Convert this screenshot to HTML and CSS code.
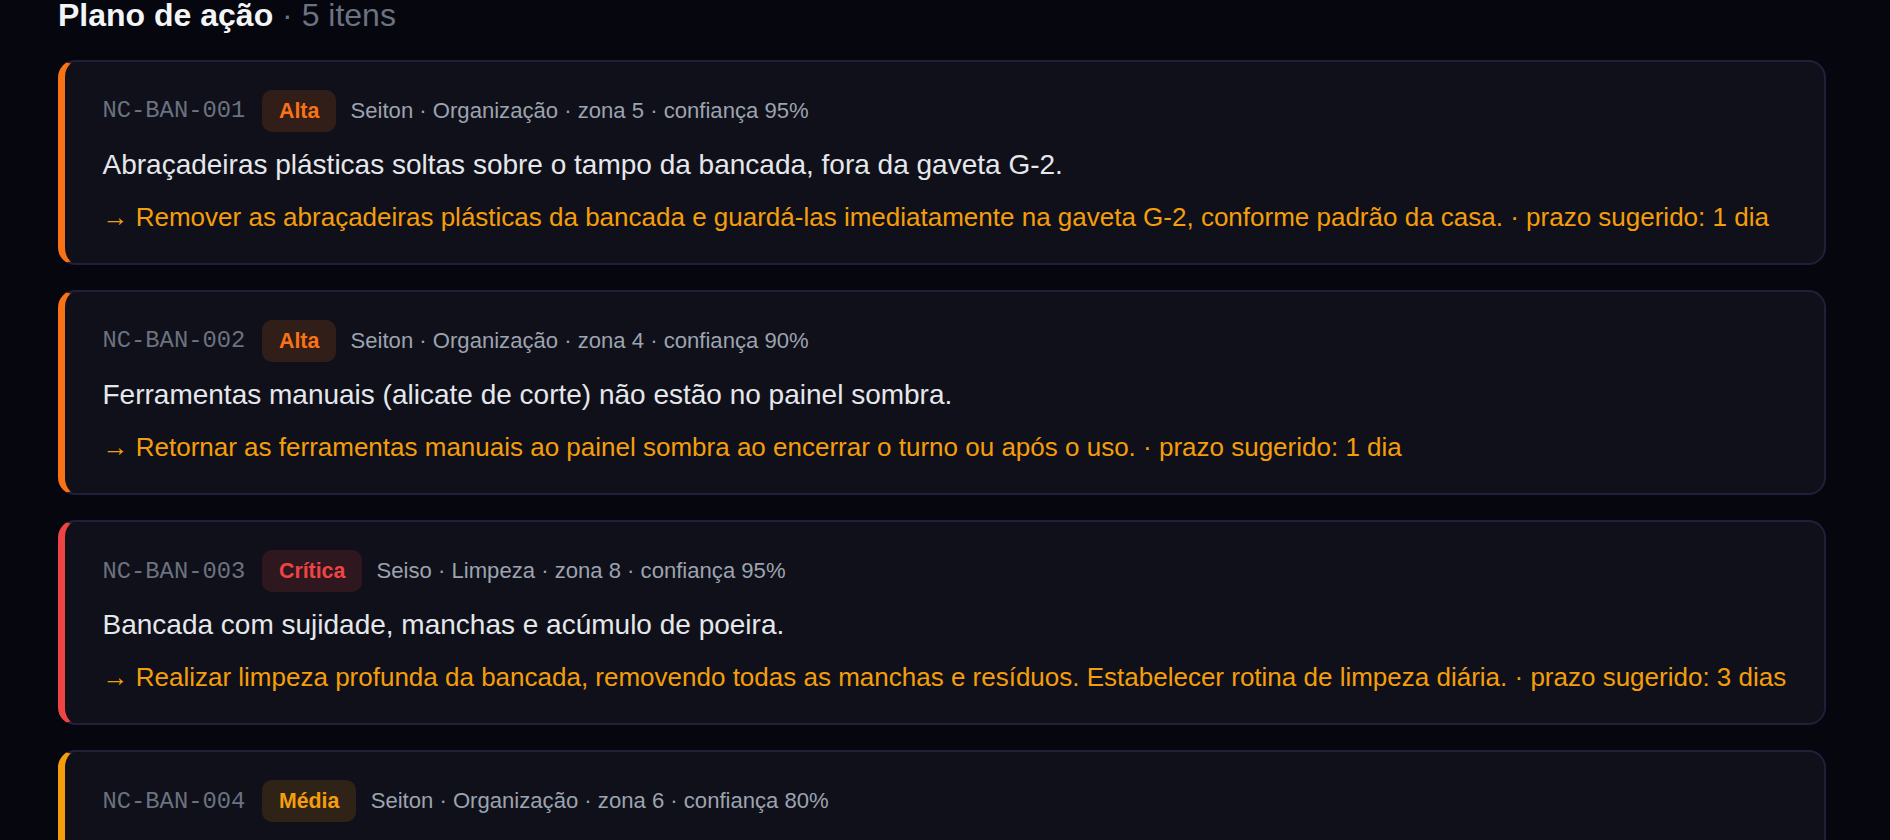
FILE: index.html
```html
<!DOCTYPE html>
<html lang="pt-BR">
<head>
<meta charset="utf-8">
<title>Plano de ação</title>
<link rel="stylesheet" href="styles.css">
</head>
<body>
<main class="plan">
  <h2 class="plan-title">Plano de ação <span class="count">· 5 itens</span></h2>
  <ul class="items">
    <li class="item sev-alta">
      <div class="item-head">
        <span class="item-id">NC-BAN-001</span>
        <span class="badge">Alta</span>
        <span class="meta">Seiton · Organização · zona 5 · confiança 95%</span>
      </div>
      <p class="desc">Abraçadeiras plásticas soltas sobre o tampo da bancada, fora da gaveta G-2.</p>
      <p class="action">→ Remover as abraçadeiras plásticas da bancada e guardá-las imediatamente na gaveta G-2, conforme padrão da casa. · prazo sugerido: 1 dia</p>
    </li>
    <li class="item sev-alta">
      <div class="item-head">
        <span class="item-id">NC-BAN-002</span>
        <span class="badge">Alta</span>
        <span class="meta">Seiton · Organização · zona 4 · confiança 90%</span>
      </div>
      <p class="desc">Ferramentas manuais (alicate de corte) não estão no painel sombra.</p>
      <p class="action">→ Retornar as ferramentas manuais ao painel sombra ao encerrar o turno ou após o uso. · prazo sugerido: 1 dia</p>
    </li>
    <li class="item sev-critica">
      <div class="item-head">
        <span class="item-id">NC-BAN-003</span>
        <span class="badge">Crítica</span>
        <span class="meta">Seiso · Limpeza · zona 8 · confiança 95%</span>
      </div>
      <p class="desc">Bancada com sujidade, manchas e acúmulo de poeira.</p>
      <p class="action">→ Realizar limpeza profunda da bancada, removendo todas as manchas e resíduos. Estabelecer rotina de limpeza diária. · prazo sugerido: 3 dias</p>
    </li>
    <li class="item sev-media">
      <div class="item-head">
        <span class="item-id">NC-BAN-004</span>
        <span class="badge">Média</span>
        <span class="meta">Seiton · Organização · zona 6 · confiança 80%</span>
      </div>
      <p class="desc">Cabos e extensões sem identificação enrolados sobre a bancada.</p>
      <p class="action">→ Identificar e organizar os cabos no suporte lateral da bancada. · prazo sugerido: 2 dias</p>
    </li>
    <li class="item sev-media">
      <div class="item-head">
        <span class="item-id">NC-BAN-005</span>
        <span class="badge">Média</span>
        <span class="meta">Seiketsu · Padronização · zona 2 · confiança 75%</span>
      </div>
      <p class="desc">Etiquetas de identificação das gavetas desgastadas.</p>
      <p class="action">→ Substituir as etiquetas das gavetas conforme padrão visual. · prazo sugerido: 5 dias</p>
    </li>
  </ul>
</main>
</body>
</html>
```

FILE: styles.css
```css
html, body {
  margin: 0;
  background: #05060e;
}

body {
  font-family: "Liberation Sans", Arial, sans-serif;
  overflow: hidden;
}

.plan {
  padding: 0 64px 40px 58px;
}

.plan-title {
  margin: -1.5px 0 29px;
  font-size: 32px;
  line-height: 32px;
  font-weight: 700;
  color: #f3f4f6;
}

.count {
  font-weight: 400;
  color: #6b7280;
}

.items {
  list-style: none;
  margin: 0;
  padding: 0;
  display: flex;
  flex-direction: column;
  gap: 24.5px;
}

.item {
  --sev: #f97316;
  --sev-bg: rgba(249, 115, 22, 0.15);
  background: #0f1019;
  border: 2px solid #211f3a;
  border-left: 7px solid var(--sev);
  border-radius: 17.5px;
  padding: 28.5px 30px 26px 37.5px;
}

.sev-alta {
  --sev: #f97316;
  --sev-bg: rgba(249, 115, 22, 0.15);
}

.sev-critica {
  --sev: #ef4444;
  --sev-bg: rgba(239, 68, 68, 0.14);
}

.sev-media {
  --sev: #f59e0b;
  --sev-bg: rgba(245, 158, 11, 0.14);
}

.item-head {
  display: flex;
  align-items: center;
  gap: 14.5px;
}

.item-id {
  font-family: "Liberation Mono", monospace;
  font-size: 23.8px;
  margin-right: 2.4px;
  color: #6b7280;
}

.badge {
  font-size: 21.3px;
  font-weight: 700;
  line-height: 24px;
  padding: 8.85px 16.8px;
  border-radius: 10px;
  color: var(--sev);
  background: var(--sev-bg);
}

.meta {
  font-size: 22.1px;
  color: #9ca3af;
}

.desc {
  margin: 12.5px 0 0;
  font-size: 28px;
  line-height: 42px;
  color: #e5e7eb;
}

.action {
  margin: 11.5px 0 0;
  font-size: 26px;
  line-height: 39.4px;
  color: #f59e0b;
}
```
